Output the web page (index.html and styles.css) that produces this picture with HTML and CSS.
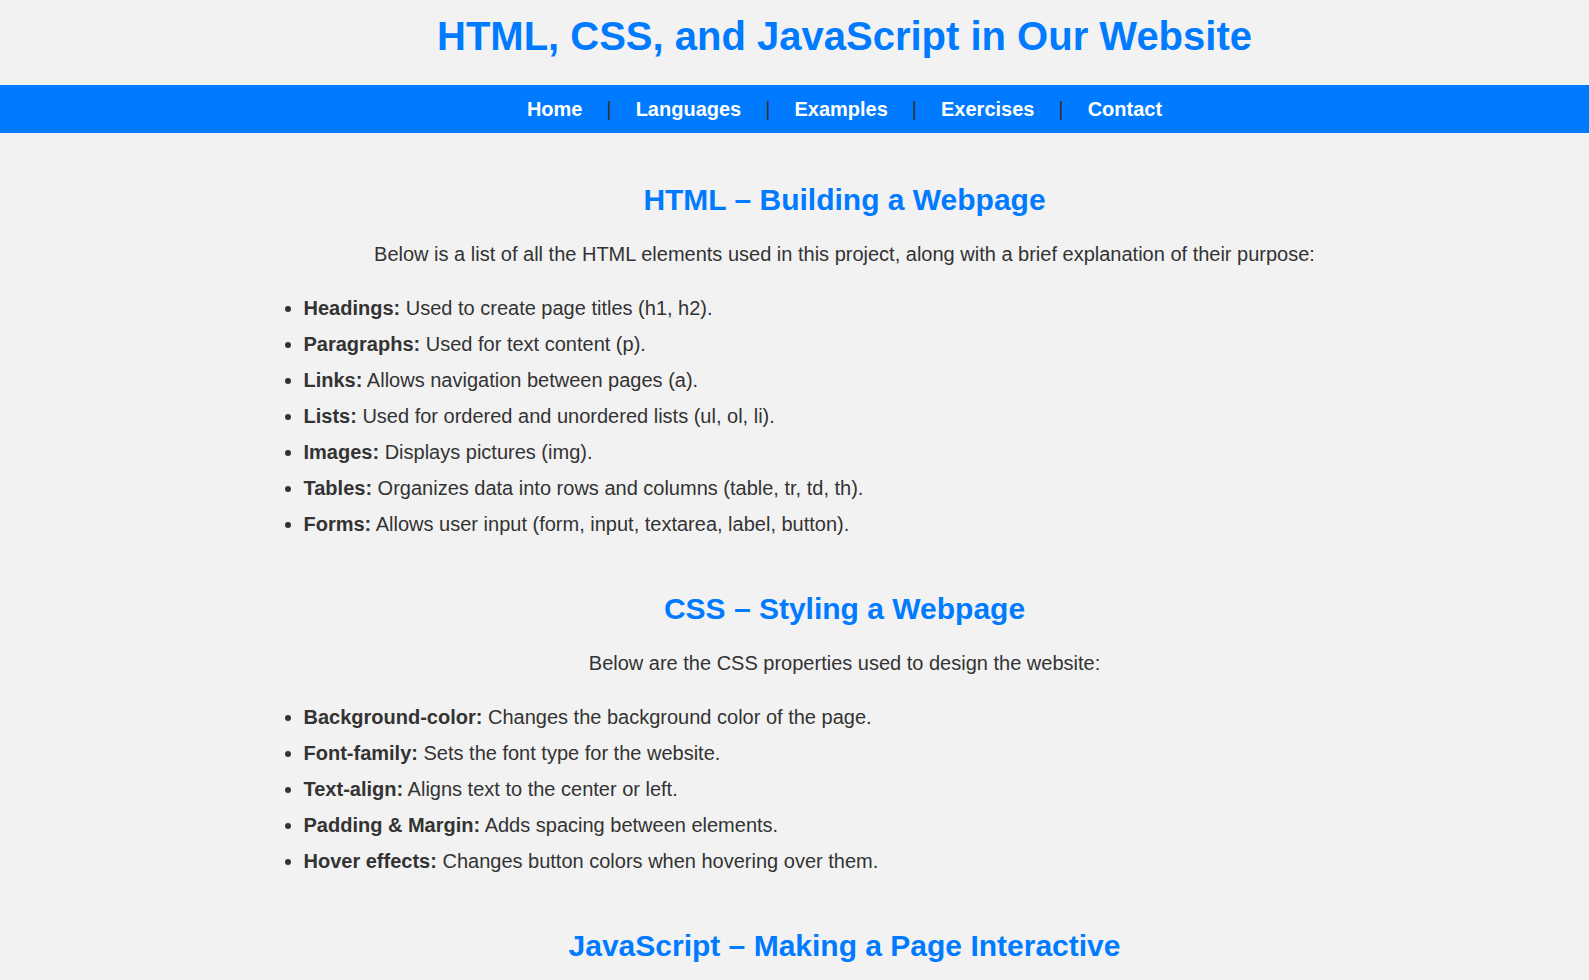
FILE: index.html
```html
<!DOCTYPE html>
<html lang="en">
<head>
<meta charset="utf-8">
<title>HTML, CSS, and JavaScript in Our Website</title>
<link rel="stylesheet" href="styles.css">
</head>
<body>
<header class="site-header">
  <h1 class="site-title">HTML, CSS, and JavaScript in Our Website</h1>
</header>
<nav class="site-nav">
  <div class="nav-row">
    <a class="nav-link" href="#">Home</a>
    <span class="nav-sep">|</span>
    <a class="nav-link" href="#">Languages</a>
    <span class="nav-sep">|</span>
    <a class="nav-link" href="#">Examples</a>
    <span class="nav-sep">|</span>
    <a class="nav-link" href="#">Exercises</a>
    <span class="nav-sep">|</span>
    <a class="nav-link" href="#">Contact</a>
  </div>
</nav>
<main class="content">
  <section class="topic">
    <h2 class="topic-title">HTML – Building a Webpage</h2>
    <p class="topic-intro">Below is a list of all the HTML elements used in this project, along with a brief explanation of their purpose:</p>
    <ul class="topic-list">
      <li><strong>Headings:</strong> Used to create page titles (h1, h2).</li>
      <li><strong>Paragraphs:</strong> Used for text content (p).</li>
      <li><strong>Links:</strong> Allows navigation between pages (a).</li>
      <li><strong>Lists:</strong> Used for ordered and unordered lists (ul, ol, li).</li>
      <li><strong>Images:</strong> Displays pictures (img).</li>
      <li><strong>Tables:</strong> Organizes data into rows and columns (table, tr, td, th).</li>
      <li><strong>Forms:</strong> Allows user input (form, input, textarea, label, button).</li>
    </ul>
  </section>
  <section class="topic">
    <h2 class="topic-title">CSS – Styling a Webpage</h2>
    <p class="topic-intro">Below are the CSS properties used to design the website:</p>
    <ul class="topic-list">
      <li><strong>Background-color:</strong> Changes the background color of the page.</li>
      <li><strong>Font-family:</strong> Sets the font type for the website.</li>
      <li><strong>Text-align:</strong> Aligns text to the center or left.</li>
      <li><strong>Padding &amp; Margin:</strong> Adds spacing between elements.</li>
      <li><strong>Hover effects:</strong> Changes button colors when hovering over them.</li>
    </ul>
  </section>
  <section class="topic">
    <h2 class="topic-title">JavaScript – Making a Page Interactive</h2>
  </section>
</main>
</body>
</html>
```
FILE: styles.css
```css
html, body {
  margin: 0;
  padding: 0;
}

body {
  background: #f2f2f2;
  color: #333333;
  font-family: "Liberation Sans", Arial, sans-serif;
}

.site-header {
  padding: 12px 0 25px 100px;
  text-align: center;
}

.site-title {
  margin: 0;
  font-size: 40px;
  line-height: 48px;
  font-weight: bold;
  color: #007bff;
}

.site-nav {
  background: #007bff;
  padding-left: 100px;
}

.nav-row {
  display: flex;
  justify-content: center;
  align-items: center;
  gap: 24px;
  height: 48px;
  line-height: 48px;
  font-size: 20px;
}

.nav-link {
  color: #ffffff;
  font-weight: bold;
  text-decoration: none;
}

.nav-sep {
  color: #333333;
  font-weight: normal;
}

.content {
  padding: 49px 0 0 100px;
  display: flex;
  flex-direction: column;
  gap: 49px;
}

.topic {
  width: 1162px;
  margin: 0 auto;
}

.topic-title {
  margin: 0 0 22px;
  font-size: 30px;
  line-height: 36px;
  font-weight: bold;
  color: #007bff;
  text-align: center;
}

.topic-intro {
  margin: 0 0 22px;
  font-size: 20px;
  line-height: 28px;
  text-align: center;
}

.topic-list {
  margin: 0;
  padding-left: 40px;
  font-size: 20px;
  line-height: 36px;
}
```
